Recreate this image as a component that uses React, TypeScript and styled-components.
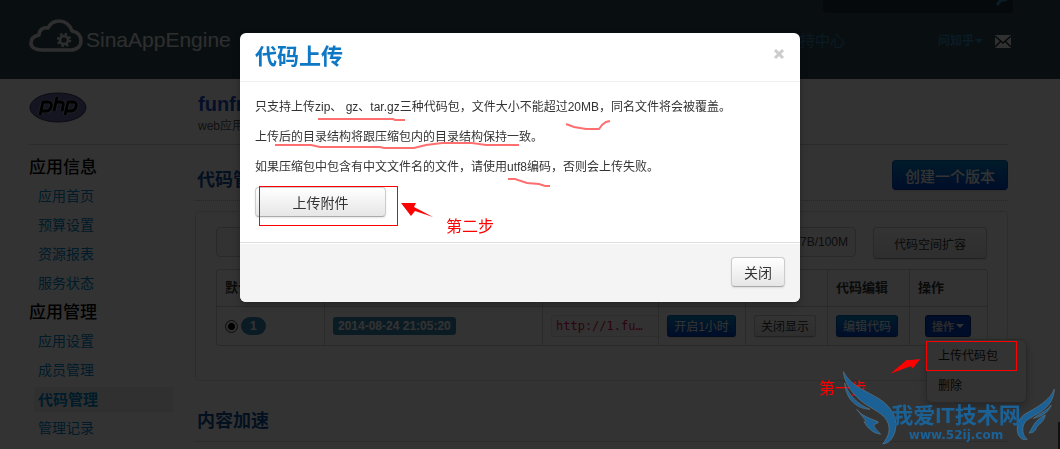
import React from 'react';
import styled, { createGlobalStyle, css } from 'styled-components';

const sans = `"Liberation Sans", "Noto Sans CJK SC", sans-serif`;

const GlobalStyle = createGlobalStyle`
  * { box-sizing: border-box; }
  body {
    margin: 0;
    background: #fff;
    color: #333;
    font: 12px/20px ${sans};
  }
  h1, h2, h3, p, ul { margin: 0; padding: 0; }
  ul { list-style: none; }
  a { color: #08c; text-decoration: none; }
  button, input { font-family: inherit; margin: 0; }
`;

const Page = styled.div`
  position: relative;
  min-height: 100vh;
  overflow: hidden;
`;

/* ---------- top bar ---------- */

const TopBar = styled.header`
  background: #2d4658;
  padding: 0 47px 16px 29px;
`;

const SearchForm = styled.form`
  display: flex;
  align-items: center;
  width: 190px;
  height: 30px;
  margin: -17px 0 6px auto;
  padding-right: 4px;
  border-radius: 4px;
  background: #20303c;
`;

const SearchInput = styled.input`
  flex: 1;
  min-width: 0;
  border: 0;
  background: transparent;
`;

const TopRow = styled.div`
  display: flex;
  align-items: center;
  height: 44px;
  padding-right: 2px;
`;

const Logo = styled.a`
  display: flex;
  align-items: flex-end;
  align-self: flex-start;
  gap: 3px;
  color: #e4e4e4;
  font-size: 21px;
  line-height: 24px;
`;

const NavLink = styled.a`
  margin-left: auto;
  color: #2f86b5;
  font-size: 15px;
`;

const UserLink = styled.a`
  display: flex;
  align-items: center;
  gap: 1px;
  margin: 0 12px 0 93px;
  color: #2f86b5;
  font-weight: bold;
`;

const Caret = styled.span<{ $color: string }>`
  width: 0;
  height: 0;
  border: 4px solid transparent;
  border-top-color: ${(p) => p.$color};
  border-bottom: 0;
`;

/* ---------- page body ---------- */

const Content = styled.div`
  padding: 0 52px 0 29px;
`;

const AppHead = styled.div`
  display: grid;
  grid-template-columns: 169px 1fr;
  height: 66px;
  padding-top: 13px;
  border-bottom: 1px solid #d5d5d5;
`;

const AppName = styled.h1`
  color: #1a4fc6;
  font-size: 20px;
  line-height: 24px;
`;

const AppKind = styled.p`
  color: #555;
  line-height: 20px;
`;

const Columns = styled.div`
  display: grid;
  grid-template-columns: 144px minmax(0, 1fr);
  gap: 22px;
`;

const SideNav = styled.nav`
  padding-top: 8px;
`;

const SideTitle = styled.h2`
  color: #000;
  font-size: 17px;
  font-weight: 500;
  line-height: 29px;
`;

const SideList = styled.ul`
  display: grid;
  gap: 4px;
  padding: 2px 0 2px 5px;
`;

const SideLink = styled.a<{ $active?: boolean }>`
  display: block;
  padding-left: 4px;
  font-size: 14px;
  line-height: 25px;
  ${(p) => p.$active && css`
    background: #eee;
    font-size: 15px;
    font-weight: bold;
  `}
`;

const SectionHead = styled.div<{ $top: number }>`
  display: flex;
  align-items: flex-end;
  justify-content: space-between;
  padding: ${(p) => p.$top}px 0 10px 2px;
  border-bottom: 1px dotted #bbb;
`;

const SectionTitle = styled.h2`
  color: #0f4fa0;
  font-size: 18px;
  font-weight: 600;
  line-height: 20px;
`;

const Panel = styled.section`
  margin-top: 10px;
  padding: 15px 20px 34px;
  border: 1px dotted #bbb;
  border-radius: 5px;
`;

const QuotaRow = styled.div`
  display: flex;
  gap: 17px;
  margin-bottom: 10px;
`;

const QuotaField = styled.input`
  flex: 1;
  min-width: 0;
  height: 30px;
  padding: 0 7px;
  border: 1px solid #ccc;
  border-radius: 4px;
  background: #f8f8f8;
  color: #444;
  font-size: 12px;
  text-align: right;
`;

const sizes = {
  mini: css`height: 22px; padding: 0 6px; font-size: 11px; font-weight: bold; border-radius: 3px;`,
  small: css`height: 22px; padding: 0 7px; font-size: 12px; border-radius: 3px;`,
  medium: css`height: 32px; padding: 0 20px; font-size: 12px; border-radius: 4px;`,
  large: css`height: 30px; padding: 0 12px; font-size: 14px; border-radius: 4px;`,
  title: css`height: 30px; padding: 0 12px; font-size: 15px; font-weight: 500; border-radius: 4px;`,
};

const Button = styled.button<{ $size: keyof typeof sizes; $tone?: 'blue' | 'navy'; $width?: number }>`
  display: inline-flex;
  align-items: center;
  justify-content: center;
  gap: 2px;
  white-space: nowrap;
  ${(p) => sizes[p.$size]}
  ${(p) => p.$width && css`width: ${p.$width}px;`}
  border: 1px solid #ccc;
  border-bottom-color: #aaa;
  background: linear-gradient(#fff, #e6e6e6);
  box-shadow: 0 1px 2px rgba(0, 0, 0, 0.1);
  color: #333;
  ${(p) => p.$tone && css`
    border-color: ${p.$tone === 'blue' ? '#0070c0 #0055bb #003a99' : '#002a80'};
    background: ${p.$tone === 'blue' ? 'linear-gradient(#08c, #04c)' : '#04c'};
    color: ${p.$tone === 'blue' ? '#fff' : '#ccc'};
  `}
`;

const VersionTable = styled.table`
  width: 100%;
  table-layout: fixed;
  border: 1px solid #d2d2d2;
  border-left: 0;
  border-radius: 4px;
  border-spacing: 0;
  th, td {
    padding: 0 8px;
    border-left: 1px solid #d2d2d2;
    text-align: left;
  }
  th {
    height: 36px;
    font-size: 13px;
  }
  td {
    height: 39px;
    border-top: 1px solid #d2d2d2;
  }
`;

const VersionPick = styled.label`
  display: flex;
  align-items: center;
  gap: 3px;
`;

const Radio = styled.input`
  appearance: none;
  width: 13px;
  height: 13px;
  border: 1px solid #444;
  border-radius: 50%;
  background: radial-gradient(#000 0 3px, #eee 4px);
`;

const Tag = styled.span<{ $round?: boolean }>`
  display: inline-block;
  padding: ${(p) => (p.$round ? '0 9px' : '0 5px')};
  border-radius: ${(p) => (p.$round ? 9 : 3)}px;
  background: #3a87ad;
  color: #fff;
  font-size: 12px;
  font-weight: bold;
  line-height: 18px;
`;

const UrlClip = styled.div`
  overflow: hidden;
  margin-right: -8px;
`;

const Url = styled.code`
  display: block;
  width: 120px;
  padding: 0 4px;
  border: 1px solid #e1e1e8;
  border-radius: 3px;
  background: #f7f7f9;
  color: #d14;
  font: 12px/20px "DejaVu Sans Mono", monospace;
`;

const MenuAnchor = styled.div`
  position: relative;
  padding-left: 7px;
`;

const Menu = styled.ul`
  position: absolute;
  top: 24px;
  left: 8px;
  width: 101px;
  padding: 1px 0;
  border: 1px solid #ccc;
  border-radius: 6px;
  background: #fff;
  box-shadow: 0 4px 8px rgba(0, 0, 0, 0.25);
`;

const MenuLink = styled.a`
  display: block;
  padding: 0 11px;
  color: #222;
  line-height: 30px;
`;

/* ---------- dialog ---------- */

const Backdrop = styled.div`
  position: fixed;
  inset: 0;
  background: rgba(0, 0, 0, 0.8);
`;

const DialogLayer = styled.div`
  position: absolute;
  inset: 0;
  padding: 33px 20px 0 0;
`;

const Dialog = styled.div`
  position: relative;
  width: 560px;
  margin: 0 auto;
  border-radius: 6px;
  background: #fff;
  box-shadow: 0 3px 7px rgba(0, 0, 0, 0.3);
`;

const DialogHead = styled.div`
  display: flex;
  align-items: center;
  justify-content: space-between;
  height: 49px;
  padding: 0 15px;
  border-bottom: 1px solid #eee;
`;

const DialogTitle = styled.h3`
  color: #0e78c4;
  font-size: 22px;
  font-weight: 600;
  line-height: 30px;
`;

const CloseIcon = styled.button`
  display: flex;
  margin-bottom: 6px;
  padding: 0;
  border: 0;
  background: none;
`;

const DialogBody = styled.div`
  display: flex;
  flex-direction: column;
  align-items: flex-start;
  gap: 10px;
  padding: 15px 15px 25px;
`;

const DialogFoot = styled.div`
  display: flex;
  justify-content: flex-end;
  padding: 14px 15px 15px;
  border-top: 1px solid #ddd;
  border-radius: 0 0 6px 6px;
  background: #f4f4f4;
  box-shadow: inset 0 1px 0 #fff;
`;

/* ---------- tutorial marks ---------- */

const Marks = styled.svg`
  position: absolute;
  left: 0;
  top: 0;
  pointer-events: none;
`;

const RedFrame = styled.div<{ $w: number; $h: number }>`
  position: absolute;
  width: ${(p) => p.$w}px;
  height: ${(p) => p.$h}px;
  border: 1px solid #f00;
  pointer-events: none;
`;

const UploadFrame = styled(RedFrame)`
  left: 19px;
  top: 153px;
`;

const MenuFrame = styled(RedFrame)`
  left: 106px;
  top: 42px;
`;

const StepLabel = styled.span<{ $x: number; $y: number }>`
  position: absolute;
  left: ${(p) => p.$x}px;
  top: ${(p) => p.$y}px;
  color: #f00;
  font-size: 16px;
  line-height: 20px;
  white-space: nowrap;
`;

const CornerLayer = styled.div`
  position: absolute;
  top: 299px;
  right: 0;
  width: 240px;
  height: 150px;
  pointer-events: none;
`;

const Watermark = styled.div`
  position: absolute;
  left: 70px;
  top: 104px;
  width: 132px;
  color: #1b6196;
  font-size: 22px;
  font-weight: bold;
  line-height: 26px;
  text-align: center;
  white-space: nowrap;
`;

const WatermarkUrl = styled.div`
  font: bold 12px/12px "DejaVu Sans", sans-serif;
`;

const SideTab = styled.div`
  position: absolute;
  right: 0;
  bottom: 0;
  width: 2px;
  height: 27px;
  background: #111;
`;

const infoLinks = ['应用首页', '预算设置', '资源报表', '服务状态'];
const manageLinks = ['应用设置', '成员管理', '代码管理', '管理记录'];
const columnWidths = [108, 218, 116, 87, 82, 82, 78];

function CloudLogo() {
  return (
    <svg width="54" height="33" viewBox="0 0 54 33" fill="none" stroke="#e4e4e4" aria-hidden="true">
      <path
        d="M13 31h29c6 0 10-4 10-9 0-6-4-9-9-10C41 6 36 2 30 2c-5 0-9 3-11 7-5-1-9 2-9 7-5 1-8 4-8 8 0 4 4 7 11 7z"
        strokeWidth="3.6"
        strokeLinejoin="round"
      />
      <circle cx="35" cy="21" r="4" strokeWidth="2.6" />
      <circle cx="35" cy="21" r="6" strokeWidth="2.4" strokeDasharray="2.4 2.31" />
    </svg>
  );
}

function PhpLogo() {
  return (
    <svg width="58" height="31" viewBox="0 0 58 31" role="img" aria-label="php">
      <ellipse cx="29" cy="15.5" rx="28" ry="14.5" fill="#6c6ca8" stroke="#333355" />
      <g fill="none" strokeLinejoin="round">
        {[
          { c: '#9c9cb8', w: 4.6 },
          { c: '#000', w: 2.8 },
        ].map((s) => (
          <path
            key={s.c}
            stroke={s.c}
            strokeWidth={s.w}
            d="M11 23l3-13h5c3 0 4 2 3 5s-3 4-5 4h-4M28 5l-3 14M27 10h4c3 0 4 1 3 4l-1 5M36 23l3-13h5c3 0 4 2 3 5s-3 4-5 4h-4"
          />
        ))}
      </g>
    </svg>
  );
}

function SideSection({ title, links }: { title: string; links: string[] }) {
  return (
    <>
      <SideTitle>{title}</SideTitle>
      <SideList>
        {links.map((text) => (
          <li key={text}>
            <SideLink href="#" $active={text === '代码管理'}>{text}</SideLink>
          </li>
        ))}
      </SideList>
    </>
  );
}

function Versions() {
  return (
    <VersionTable>
      <colgroup>
        {columnWidths.map((w, i) => <col key={i} width={w} />)}
      </colgroup>
      <thead>
        <tr>
          <th>默认</th>
          <th />
          <th />
          <th />
          <th>显示</th>
          <th>代码编辑</th>
          <th>操作</th>
        </tr>
      </thead>
      <tbody>
        <tr>
          <td>
            <VersionPick>
              <Radio type="radio" name="version" defaultChecked />
              <Tag $round>1</Tag>
            </VersionPick>
          </td>
          <td><Tag>2014-08-24 21:05:20</Tag></td>
          <td><UrlClip><Url>http://1.fu…</Url></UrlClip></td>
          <td><Button $size="small" $tone="blue" $width={69}>开启1小时</Button></td>
          <td><Button $size="small" $width={62}>关闭显示</Button></td>
          <td><Button $size="small" $tone="blue" $width={62}>编辑代码</Button></td>
          <td>
            <MenuAnchor>
              <Button $size="mini" $tone="navy" $width={46}>操作<Caret $color="#fff" /></Button>
              <Menu>
                <li><MenuLink href="#">上传代码包</MenuLink></li>
                <li><MenuLink href="#">删除</MenuLink></li>
              </Menu>
            </MenuAnchor>
          </td>
        </tr>
      </tbody>
    </VersionTable>
  );
}

function UploadDialog() {
  return (
    <Dialog role="dialog" aria-labelledby="upload-title">
      <DialogHead>
        <DialogTitle id="upload-title">代码上传</DialogTitle>
        <CloseIcon type="button" aria-label="关闭">
          <svg width="12" height="12" viewBox="0 0 12 12" stroke="#ccc" strokeWidth="3">
            <path d="M2 2l8 8M10 2l-8 8" />
          </svg>
        </CloseIcon>
      </DialogHead>
      <DialogBody>
        <p>只支持上传zip、 gz、tar.gz三种代码包，文件大小不能超过20MB，同名文件将会被覆盖。</p>
        <p>上传后的目录结构将跟压缩包内的目录结构保持一致。</p>
        <p>如果压缩包中包含有中文文件名的文件，请使用utf8编码，否则会上传失败。</p>
        <Button $size="large" $width={131}>上传附件</Button>
      </DialogBody>
      <DialogFoot>
        <Button $size="large" $width={54}>关闭</Button>
      </DialogFoot>
      <Marks width="560" height="269" viewBox="0 0 560 269" fill="none" aria-hidden="true">
        <g stroke="#ff6f6f" strokeWidth="2">
          <path d="M78 86h75l2 1h10" />
          <path d="M35 112h36l9 2h60l4 1h30l12-3 16-2h30l14 2h33" />
          <path d="M326 91l8 3 12 2h13l3-4 4-3 4-1" />
          <path d="M268 146h7l12 4 12 1 6 2h5" />
        </g>
        <path fill="#f00" d="M161 170l15 0-2 4 19 10-18-6-4 5z" />
      </Marks>
      <UploadFrame $w={139} $h={40} />
      <StepLabel $x={206} $y={184}>第二步</StepLabel>
    </Dialog>
  );
}

export default function App() {
  return (
    <Page>
      <GlobalStyle />
      <TopBar>
        <SearchForm>
          <SearchInput aria-label="搜索" />
          <svg width="14" height="20" viewBox="0 0 14 20" fill="none" stroke="#3a8fc0" aria-hidden="true">
            <circle cx="9" cy="9" r="3.5" strokeWidth="2" />
            <path d="M6 12l-4 5" strokeWidth="3" />
          </svg>
        </SearchForm>
        <TopRow>
          <Logo href="#"><CloudLogo />SinaAppEngine</Logo>
          <NavLink href="#">支持中心</NavLink>
          <UserLink href="#">问知乎<Caret $color="#2f86b5" /></UserLink>
          <svg width="16" height="13" viewBox="0 0 16 13" role="img" aria-label="消息">
            <path fill="#eee" d="M0 0h16v13H0z" />
            <path d="M0 1l8 7 8-7M0 12l6-6M16 12l-6-6" fill="none" stroke="#1c2a35" strokeWidth="1.5" />
          </svg>
        </TopRow>
      </TopBar>
      <Content>
        <AppHead>
          <PhpLogo />
          <div>
            <AppName>funfr</AppName>
            <AppKind>web应用</AppKind>
          </div>
        </AppHead>
        <Columns>
          <SideNav>
            <SideSection title="应用信息" links={infoLinks} />
            <SideSection title="应用管理" links={manageLinks} />
          </SideNav>
          <main>
            <SectionHead $top={15}>
              <SectionTitle>代码管理</SectionTitle>
              <Button $size="title" $tone="blue" $width={116}>创建一个版本</Button>
            </SectionHead>
            <Panel>
              <QuotaRow>
                <QuotaField aria-label="代码空间" readOnly value="7B/100M" />
                <Button $size="medium" $width={114}>代码空间扩容</Button>
              </QuotaRow>
              <Versions />
            </Panel>
            <SectionHead $top={30}>
              <SectionTitle>内容加速</SectionTitle>
            </SectionHead>
          </main>
        </Columns>
      </Content>
      <Backdrop />
      <DialogLayer>
        <UploadDialog />
      </DialogLayer>
      <CornerLayer>
        <StepLabel $x={-1} $y={80}>第一步</StepLabel>
        <Marks width="240" height="150" viewBox="0 0 720 450" aria-hidden="true">
          <path fill="#f00" d="M211 224l50-42 6 2 34-4-22 28-8-6z" />
          <g fill="#1b6196" stroke="#5f7481" strokeWidth="2">
            <path d="M70 218C95 263 135 273 175 298C215 323 235 358 225 398C217 423 205 433 188 435C208 410 213 388 200 364C185 338 145 326 120 303C90 276 73 248 70 218Z" />
            <path d="M74 252C85 290 115 316 150 331C115 330 78 306 74 252Z" />
            <path d="M110 331C127 352 150 358 174 368C178 376 158 372 163 382C166 392 174 396 182 406C150 400 140 380 132 368C146 374 130 356 110 331Z" />
            <path d="M703 270C690 305 650 325 615 345C590 360 585 400 600 415C608 424 616 422 622 421C606 408 604 385 616 368C640 345 700 335 703 270Z" />
            <path d="M694 318C685 345 655 355 640 358C665 340 680 335 694 318Z" />
            <path d="M676 348C672 370 655 375 650 385C645 400 635 402 627 402C640 385 640 365 676 348Z" />
          </g>
        </Marks>
        <Watermark>
          我爱IT技术网
          <WatermarkUrl>www.52ij.com</WatermarkUrl>
        </Watermark>
        <MenuFrame $w={91} $h={30} />
        <SideTab />
      </CornerLayer>
    </Page>
  );
}
